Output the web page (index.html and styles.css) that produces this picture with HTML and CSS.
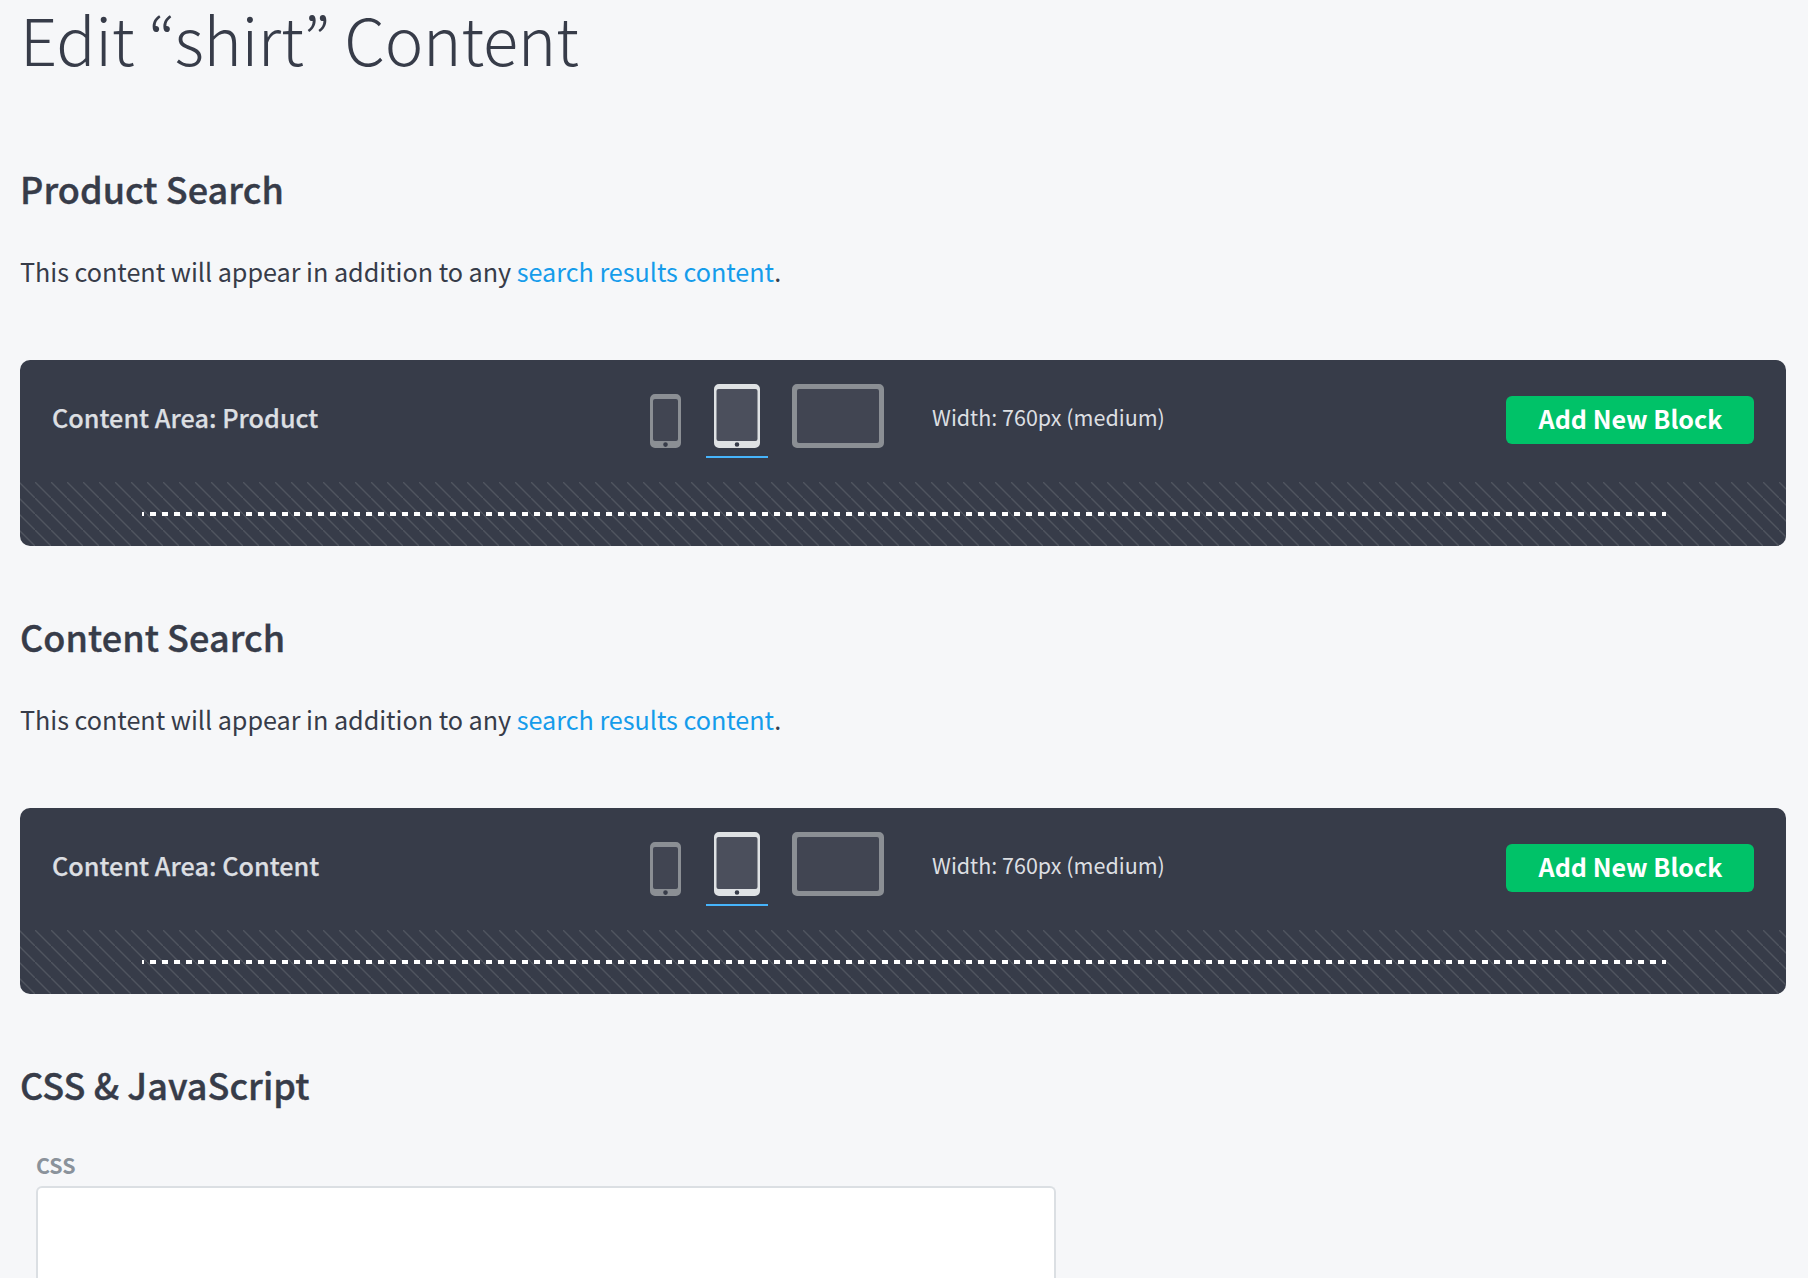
FILE: index.html
```html
<!DOCTYPE html>
<html lang="en">
<head>
<meta charset="utf-8">
<title>Edit “shirt” Content</title>
<link rel="stylesheet" href="styles.css">
</head>
<body>
<svg width="0" height="0" class="sprite" aria-hidden="true">
  <symbol id="phone" viewBox="0 0 31 54"><path fill="currentColor" fill-rule="evenodd" d="M5 0h21a5 5 0 0 1 5 5v44a5 5 0 0 1-5 5H5a5 5 0 0 1-5-5V5a5 5 0 0 1 5-5zM5 5a2 2 0 0 0-2 2v38a2 2 0 0 0 2 2h21a2 2 0 0 0 2-2V7a2 2 0 0 0-2-2zM15.5 48.3a2.3 2.3 0 1 0 0 4.6 2.3 2.3 0 0 0 0-4.6z"/><rect x="2.5" y="4.5" width="26" height="43" rx="2" fill="currentColor" opacity=".12"/></symbol>
  <symbol id="tablet" viewBox="0 0 46 64"><path fill="currentColor" fill-rule="evenodd" d="M5 0h36a5 5 0 0 1 5 5v54a5 5 0 0 1-5 5H5a5 5 0 0 1-5-5V5a5 5 0 0 1 5-5zM4.500 5a2 2 0 0 0-2 2v48a2 2 0 0 0 2 2h37a2 2 0 0 0 2-2V7a2 2 0 0 0-2-2zM23 58.200a2.300 2.300 0 1 0 0 4.600 2.300 2.300 0 0 0 0-4.600z"/><rect x="2" y="4.500" width="42" height="53" rx="2" fill="currentColor" opacity=".12"/></symbol>
  <symbol id="desktop" viewBox="0 0 92 64"><path fill="currentColor" fill-rule="evenodd" d="M5 0h82a5 5 0 0 1 5 5v54a5 5 0 0 1-5 5H5a5 5 0 0 1-5-5V5a5 5 0 0 1 5-5zM7 5a2 2 0 0 0-2 2v50a2 2 0 0 0 2 2h78a2 2 0 0 0 2-2V7a2 2 0 0 0-2-2z"/><rect x="4.500" y="4.500" width="83" height="55" rx="2" fill="currentColor" opacity=".12"/></symbol>
</svg>
<main class="page">
  <h1 class="title">Edit “shirt” Content</h1>

  <section class="section">
    <h2 class="heading">Product Search</h2>
    <p class="intro">This content will appear in addition to any <a class="link" href="#">search results content</a>.</p>
    <div class="area">
      <div class="toolbar">
        <span class="area-name">Content Area: Product</span>
        <div class="devices">
          <span class="device phone"><svg width="31" height="54"><use href="#phone"/></svg></span>
          <span class="device tablet active"><svg width="46" height="64"><use href="#tablet"/></svg></span>
          <span class="device desktop"><svg width="92" height="64"><use href="#desktop"/></svg></span>
        </div>
        <span class="width">Width: 760px (medium)</span>
        <button class="add" type="button">Add New Block</button>
      </div>
      <div class="canvas"><div class="dash"></div></div>
    </div>
  </section>

  <section class="section">
    <h2 class="heading">Content Search</h2>
    <p class="intro">This content will appear in addition to any <a class="link" href="#">search results content</a>.</p>
    <div class="area">
      <div class="toolbar">
        <span class="area-name">Content Area: Content</span>
        <div class="devices">
          <span class="device phone"><svg width="31" height="54"><use href="#phone"/></svg></span>
          <span class="device tablet active"><svg width="46" height="64"><use href="#tablet"/></svg></span>
          <span class="device desktop"><svg width="92" height="64"><use href="#desktop"/></svg></span>
        </div>
        <span class="width">Width: 760px (medium)</span>
        <button class="add" type="button">Add New Block</button>
      </div>
      <div class="canvas"><div class="dash"></div></div>
    </div>
  </section>

  <section class="section">
    <h2 class="heading">CSS &amp; JavaScript</h2>
    <div class="field">
      <label class="label" for="css">CSS</label>
      <textarea class="code" id="css"></textarea>
    </div>
  </section>
</main>
</body>
</html>
```
FILE: styles.css
```css
* { box-sizing: border-box; }
body {
  margin: 0;
  background: #f6f7f9;
  color: #373c49;
  font-family: "Noto Sans CJK KR", "Noto Sans", sans-serif;
}
.sprite { display: block; }
.page {
  height: 1278px;
  padding: 0 22px 0 20px;
  overflow: hidden;
}
.title {
  margin: 0;
  height: 158px;
  font-size: 65px;
  font-weight: 200;
  line-height: 76px;
  letter-spacing: -0.28px;
  white-space: nowrap;
}
.section { height: 448px; }
.heading {
  margin: 0;
  font-size: 36px;
  font-weight: 500;
  line-height: 60px;
  letter-spacing: 0.05px;
  white-space: nowrap;
  -webkit-text-stroke: 0.4px currentColor;
}
.intro {
  margin: 33px 0 0;
  height: 109px;
  font-size: 25.2px;
  line-height: 40px;
  letter-spacing: -0.03px;
  white-space: nowrap;
}
.link { color: #159ceb; text-decoration: none; }
.area {
  height: 186px;
  border-radius: 10px;
  background: #373c49;
  overflow: hidden;
}
.toolbar {
  display: grid;
  grid-template-columns: 622px 258px 1fr 248px;
  height: 122px;
  padding: 0 32px;
}
.area-name, .width {
  color: #dcdfe2;
  line-height: 40px;
  padding-top: 37px;
  white-space: nowrap;
}
.area-name {
  font-size: 25.2px;
  font-weight: 500;
  letter-spacing: 0.02px;
  -webkit-text-stroke: 0.25px currentColor;
}
.width { font-size: 21.5px; }
.devices { display: flex; align-items: flex-end; height: 98px; }
.device {
  display: flex;
  flex: none;
  justify-content: center;
  padding-bottom: 8px;
  border-bottom: 2px solid transparent;
  color: #8b8f94;
}
.phone { width: 47px; margin-right: 16.7px; margin-left: -31.7px; }
.tablet { width: 62px; }
.desktop { width: 108px; margin-left: 16px; }
.active { color: #dfe2e4; border-color: #46b4fb; }
.add {
  height: 48px;
  margin-top: 36px;
  padding: 0 0 5px 1px;
  border: 0;
  border-radius: 6px;
  background: #00c268;
  color: #fff;
  font: 700 25.1px/42px "Noto Sans CJK KR", "Noto Sans", sans-serif;
  white-space: nowrap;
}
.canvas {
  height: 64px;
  padding: 30px 120px 0 122px;
  background: linear-gradient(45deg, transparent 45%, #50555f 49%, #50555f 51%, transparent 55%) -1px 0 / 16px 16px;
}
.dash {
  height: 4px;
  background: repeating-linear-gradient(90deg, #fff 0 6px, transparent 6px 12px) -4px 0 / 12px 4px;
}
.field { padding: 33px 16px 0; }
.label {
  display: block;
  height: 39px;
  color: #8a929b;
  font-size: 21.4px;
  font-weight: 700;
  line-height: 36px;
}
.code {
  display: block;
  width: 1020px;
  height: 92px;
  border: 2px solid #dbdfe3;
  border-bottom: 0;
  border-radius: 6px 6px 0 0;
  background: #fff;
  resize: none;
}
```
